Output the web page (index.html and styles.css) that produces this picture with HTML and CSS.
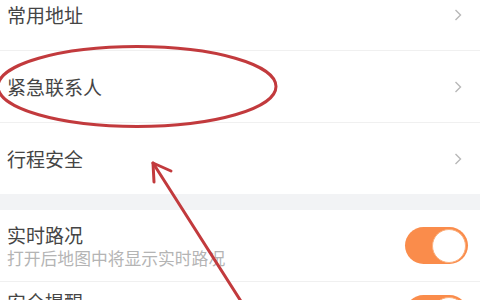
FILE: index.html
```html
<!DOCTYPE html>
<html lang="zh-CN">
<head>
    <meta charset="UTF-8">
    <meta name="viewport" content="width=device-width, initial-scale=1.0">
    <title>设置</title>
    <link rel="stylesheet" href="styles.css">
</head>
<body>
    <div class="page">
        <div class="group group-first">
            <div class="row">
                <span class="title">常用地址</span>
                <svg class="chevron" viewBox="0 0 8 12"><path d="M1.5 1 L6.5 6 L1.5 11"/></svg>
            </div>
            <div class="row">
                <span class="title">紧急联系人</span>
                <svg class="chevron" viewBox="0 0 8 12"><path d="M1.5 1 L6.5 6 L1.5 11"/></svg>
            </div>
            <div class="row">
                <span class="title">行程安全</span>
                <svg class="chevron" viewBox="0 0 8 12"><path d="M1.5 1 L6.5 6 L1.5 11"/></svg>
            </div>
        </div>
        <div class="group">
            <div class="row">
                <div class="text">
                    <span class="title">实时路况</span>
                    <span class="sub">打开后地图中将显示实时路况</span>
                </div>
                <div class="switch on"><span class="knob"></span></div>
            </div>
            <div class="row row-top">
                <div class="text">
                    <span class="title">安全提醒</span>
                </div>
                <div class="switch on"><span class="knob"></span></div>
            </div>
        </div>

        <svg class="marks" viewBox="0 0 480 300">
            <ellipse cx="137" cy="86.5" rx="139" ry="40" />
            <path d="M244 306 L153 163" />
            <path d="M154 182 L153 163 L171 171" />
        </svg>
    </div>
</body>
</html>
```

FILE: styles.css
```css
body {
    margin: 0;
    background-color: #f2f3f5;
    font-family: "Noto Sans CJK SC", "Noto Sans", sans-serif;
    overflow: hidden;
}
.page {
    position: relative;
    width: 480px;
    height: 300px;
    overflow: hidden;
}
.group {
    background: #fff;
    margin-bottom: 16px;
}
.group-first {
    margin-top: -21px;
}
.row {
    display: flex;
    align-items: center;
    justify-content: space-between;
    height: 71px;
    padding: 0 12px 0 7px;
    border-bottom: 1px solid #f0f0f0;
}
.row:last-child {
    border-bottom: none;
}
.row-top {
    align-items: flex-start;
    padding-top: 8px;
    height: 63px;
}
.title {
    font-size: 19px;
    color: #454545;
    line-height: 24px;
}
.text {
    display: flex;
    flex-direction: column;
}
.sub {
    font-size: 16.8px;
    color: #b4b4b4;
    line-height: 22px;
}
.chevron {
    width: 8px;
    height: 12px;
    margin-right: 6px;
    fill: none;
    stroke: #b8b8b8;
    stroke-width: 1.4;
}
.switch {
    width: 63px;
    height: 37px;
    border-radius: 19px;
    background: #fa8c4b;
    display: flex;
    align-items: center;
    justify-content: flex-end;
    padding: 0 2px;
    box-sizing: border-box;
}
.knob {
    width: 32px;
    height: 32px;
    border-radius: 50%;
    background: #fff;
    border: 1px solid #fbb17f;
}
.row-top .switch {
    margin-top: 5px;
}
.marks {
    position: absolute;
    left: 0;
    top: 0;
    width: 480px;
    height: 300px;
    fill: none;
    stroke: #c23a3d;
    stroke-width: 3;
    stroke-linecap: round;
    stroke-linejoin: round;
}
```
